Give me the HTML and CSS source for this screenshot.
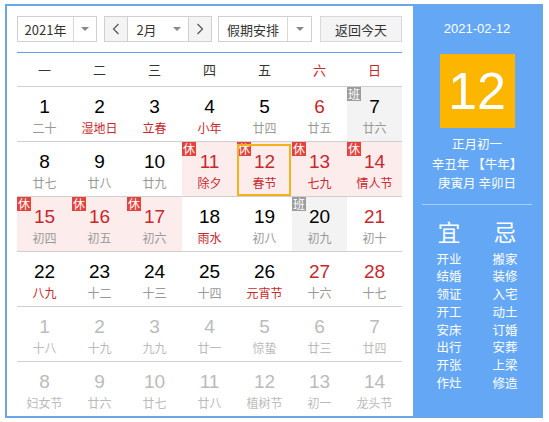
FILE: index.html
```html
<!DOCTYPE html>
<html lang="zh">
<head>
<meta charset="utf-8">
<link rel="stylesheet" href="styles.css">
</head>
<body>
<div class="cal">
  <div class="main">
    <div class="controls">
      <div class="sel year"><span class="txt">2021年</span><span class="arr"><i class="tri"></i></span></div>
      <div class="month-group">
        <span class="nav"><svg width="8" height="12" viewBox="0 0 8 12"><path d="M6.5 1 L1.5 6 L6.5 11" fill="none" stroke="#555" stroke-width="1.2"/></svg></span>
        <div class="sel month"><span class="txt">2月</span><span class="arr noline"><i class="tri"></i></span></div>
        <span class="nav"><svg width="8" height="12" viewBox="0 0 8 12"><path d="M1.5 1 L6.5 6 L1.5 11" fill="none" stroke="#555" stroke-width="1.2"/></svg></span>
      </div>
      <div class="sel holi"><span class="txt">假期安排</span><span class="arr"><i class="tri"></i></span></div>
      <div class="btn">返回今天</div>
    </div>
    <div class="grid">
      <div class="wd">一</div><div class="wd">二</div><div class="wd">三</div><div class="wd">四</div><div class="wd">五</div><div class="wd red">六</div><div class="wd red">日</div>

      <div class="c"><b>1</b><s>二十</s></div>
      <div class="c"><b>2</b><s class="r">湿地日</s></div>
      <div class="c"><b>3</b><s class="r">立春</s></div>
      <div class="c"><b>4</b><s class="r">小年</s></div>
      <div class="c"><b>5</b><s>廿四</s></div>
      <div class="c"><b class="r">6</b><s>廿五</s></div>
      <div class="c work"><em class="bdg gray">班</em><b>7</b><s>廿六</s></div>

      <div class="c"><b>8</b><s>廿七</s></div>
      <div class="c"><b>9</b><s>廿八</s></div>
      <div class="c"><b>10</b><s>廿九</s></div>
      <div class="c hol"><em class="bdg">休</em><b class="r">11</b><s class="r">除夕</s></div>
      <div class="c hol cur"><em class="bdg">休</em><b class="r">12</b><s class="r">春节</s></div>
      <div class="c hol"><em class="bdg">休</em><b class="r">13</b><s class="r">七九</s></div>
      <div class="c hol"><em class="bdg">休</em><b class="r">14</b><s class="r">情人节</s></div>

      <div class="c hol"><em class="bdg">休</em><b class="r">15</b><s>初四</s></div>
      <div class="c hol"><em class="bdg">休</em><b class="r">16</b><s>初五</s></div>
      <div class="c hol"><em class="bdg">休</em><b class="r">17</b><s>初六</s></div>
      <div class="c"><b>18</b><s class="r">雨水</s></div>
      <div class="c"><b>19</b><s>初八</s></div>
      <div class="c work"><em class="bdg gray">班</em><b>20</b><s>初九</s></div>
      <div class="c"><b class="r">21</b><s>初十</s></div>

      <div class="c"><b>22</b><s class="r">八九</s></div>
      <div class="c"><b>23</b><s>十二</s></div>
      <div class="c"><b>24</b><s>十三</s></div>
      <div class="c"><b>25</b><s>十四</s></div>
      <div class="c"><b>26</b><s class="r">元宵节</s></div>
      <div class="c"><b class="r">27</b><s>十六</s></div>
      <div class="c"><b class="r">28</b><s>十七</s></div>

      <div class="c next"><b>1</b><s>十八</s></div>
      <div class="c next"><b>2</b><s>十九</s></div>
      <div class="c next"><b>3</b><s>九九</s></div>
      <div class="c next"><b>4</b><s>廿一</s></div>
      <div class="c next"><b>5</b><s>惊蛰</s></div>
      <div class="c next"><b>6</b><s>廿三</s></div>
      <div class="c next"><b>7</b><s>廿四</s></div>

      <div class="c next"><b>8</b><s>妇女节</s></div>
      <div class="c next"><b>9</b><s>廿六</s></div>
      <div class="c next"><b>10</b><s>廿七</s></div>
      <div class="c next"><b>11</b><s>廿八</s></div>
      <div class="c next"><b>12</b><s>植树节</s></div>
      <div class="c next"><b>13</b><s>初一</s></div>
      <div class="c next"><b>14</b><s>龙头节</s></div>
    </div>
  </div>
  <div class="side">
    <div class="date">2021-02-12</div>
    <div class="big">12</div>
    <div class="lunar">
      <div>正月初一</div>
      <div>辛丑年 【牛年】</div>
      <div>庚寅月 辛卯日</div>
    </div>
    <div class="sep"></div>
    <div class="yj">
      <div class="col">
        <div class="h">宜</div>
        <div>开业</div><div>结婚</div><div>领证</div><div>开工</div><div>安床</div><div>出行</div><div>开张</div><div>作灶</div>
      </div>
      <div class="col">
        <div class="h">忌</div>
        <div>搬家</div><div>装修</div><div>入宅</div><div>动土</div><div>订婚</div><div>安葬</div><div>上梁</div><div>修造</div>
      </div>
    </div>
  </div>
</div>
</body>
</html>
```
FILE: styles.css
```css
* { box-sizing: border-box; }
html, body { margin: 0; padding: 0; background: #fff; }
body { font-family: "Noto Sans CJK SC", "Liberation Sans", sans-serif; }

.cal {
  margin: 4px 0 0 5px;
  width: 538px;
  height: 414px;
  border: 2px solid #6aa6e8;
  display: flex;
}
.main {
  width: 406px;
  padding: 10px 0 0 10px;
}
.controls {
  display: flex;
  height: 26px;
  width: 385px;
  margin-bottom: 10px;
}
.sel {
  display: flex;
  border: 1px solid #d0d0d0;
  background: #fff;
  height: 26px;
  font-size: 13px;
  color: #333;
}
.sel .txt { flex: 1; display: flex; align-items: center; justify-content: center; line-height: 1; }
.sel .arr { width: 23px; border-left: 1px solid #d8d8d8; display: flex; align-items: center; justify-content: center; }
.sel .arr.noline { border-left: none; }
.tri { width: 0; height: 0; border-left: 4px solid transparent; border-right: 4px solid transparent; border-top: 4px solid #888; }
.year { width: 80px; }
.month-group { display: flex; margin-left: 7px; border: 1px solid #d0d0d0; height: 26px; }
.month-group .sel { border: none; height: 24px; width: 62px; border-left: 1px solid #d0d0d0; border-right: 1px solid #d0d0d0; }
.nav { width: 22px; display: flex; align-items: center; justify-content: center; background: #f4f4f4; }
.holi { width: 94px; margin-left: 6px; }
.holi .arr { width: 24px; }
.btn { width: 82px; margin-left: 8px; height: 26px; border: 1px solid #d8d8d8; background: #f4f4f4; color: #333; font-size: 13px; display: flex; align-items: center; justify-content: center; }

.grid {
  width: 385px;
  border-top: 1px solid #5ea1e6;
  display: grid;
  grid-template-columns: repeat(7, 55px);
  grid-template-rows: 34px repeat(6, 55px);
}
.wd {
  display: flex; align-items: center; justify-content: center;
  font-size: 13px; color: #333;
  border-bottom: 1px solid #cfcfcf;
}
.wd.red { color: #c8282d; }
.c {
  position: relative;
  border-bottom: 1px solid #cfcfcf;
  display: flex; flex-direction: column; align-items: center;
  padding-top: 9px;
}
.grid .c:nth-last-child(-n+7) { border-bottom: none; }
.c b {
  font-family: "Liberation Sans", sans-serif;
  font-weight: normal;
  font-size: 19px;
  line-height: 22px;
  color: #000;
}
.c s {
  text-decoration: none;
  font-size: 12px;
  line-height: 17px;
  color: #999;
  margin-top: 1px;
}
.c .r { color: #c8282d; }
.c.hol { background: #fdecec; }
.c.work { background: #f3f3f3; }
.c.next b, .c.next s { color: #bbb; }
.c.cur::after {
  content: "";
  position: absolute;
  left: 0; top: 2px; right: 1px; bottom: 0;
  border: 2px solid #f4b21c;
}
.bdg {
  position: absolute;
  left: 0; top: 0;
  width: 14px; height: 14px;
  background: #e4433b;
  color: #fff;
  font-style: normal;
  font-size: 12px;
  line-height: 14px;
  text-align: center;
}
.bdg.gray { background: #9c9c9c; }

.side {
  width: 128px;
  background: #64a7f5;
  color: #fff;
  display: flex; flex-direction: column; align-items: center;
}
.date { font-family: "Liberation Sans", sans-serif; font-size: 13px; margin-top: 15px; line-height: 16px; }
.big {
  margin-top: 17px;
  width: 75px; height: 74px;
  background: #fdb600;
  font-family: "Liberation Sans", sans-serif;
  font-size: 52px;
  display: flex; align-items: center; justify-content: center;
}
.lunar { margin-top: 6px; font-size: 12.5px; line-height: 19.5px; text-align: center; }
.sep { width: 110px; height: 1px; background: #a9cff9; margin-top: 11px; }
.yj { display: flex; gap: 31px; margin-top: 14px; }
.col { display: flex; flex-direction: column; align-items: center; font-size: 12.5px; line-height: 17.8px; }
.col .h { font-size: 23px; line-height: 24px; margin-bottom: 7px; }
```
